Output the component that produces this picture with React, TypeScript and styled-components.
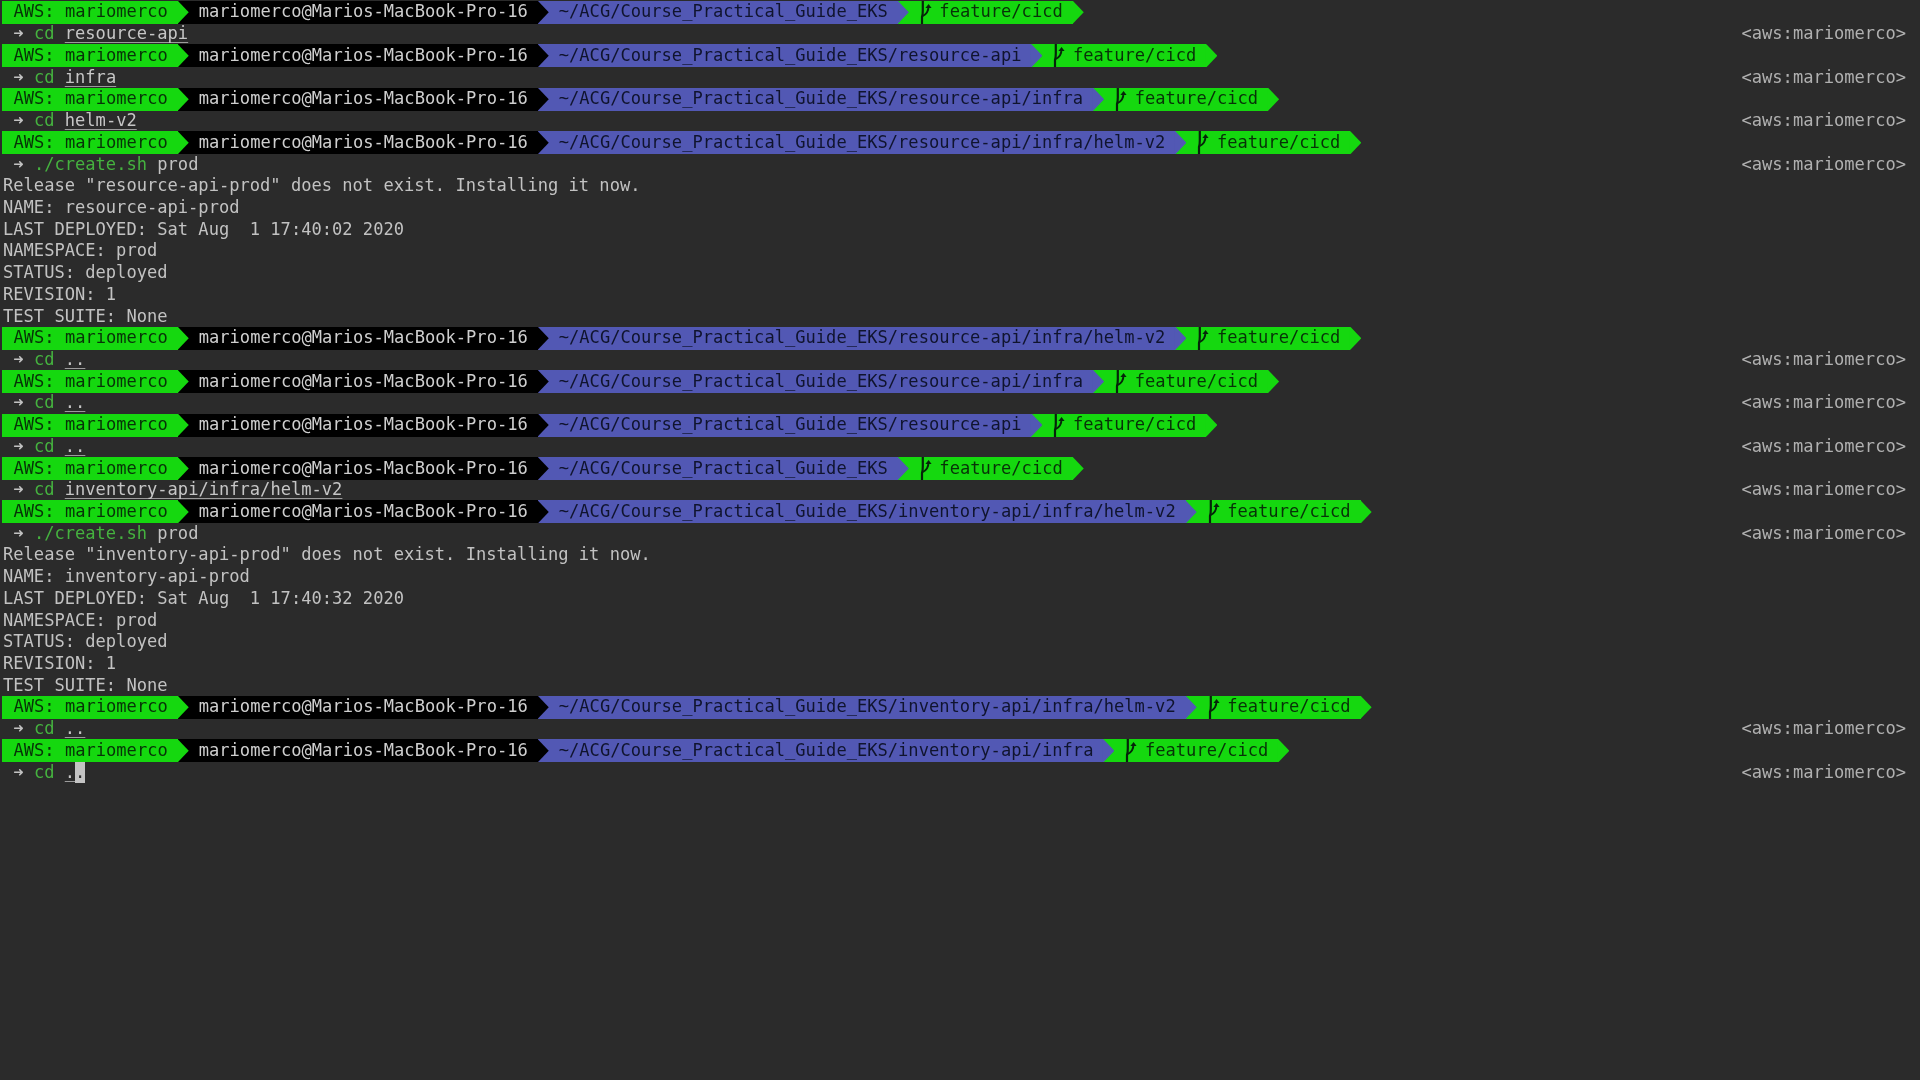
import React from "react";
import styled, { createGlobalStyle } from "styled-components";

const GlobalStyle = createGlobalStyle`
  html, body {
    margin: 0;
    padding: 0;
    background: #2b2b2b;
  }
`;

const Terminal = styled.div`
  box-sizing: border-box;
  width: 1920px;
  height: 1080px;
  overflow: hidden;
  background: #2b2b2b;
  padding: 1.5px 0 0 2px;
  font-family: "DejaVu Sans Mono", "Liberation Mono", monospace;
  font-size: 17.08px;
  line-height: 21.73px;
  color: #c2c2c2;
  white-space: pre;
  filter: blur(0.35px);
`;

const Row = styled.div`
  display: flex;
  align-items: center;
  justify-content: space-between;
  height: 21.73px;
  padding: 0 14px 0 1px;
`;

const Prompt = styled.div`
  display: flex;
  align-items: center;
  height: 21.73px;
`;

const Segment = styled.div<{ $bg: string; $fg: string; $layer: number; $first?: boolean }>`
  position: relative;
  z-index: ${(p) => p.$layer};
  display: flex;
  align-items: center;
  height: 23px;
  padding: 0 10px 0 ${(p) => (p.$first ? "11.5px" : "21px")};
  background: ${(p) => p.$bg};
  color: ${(p) => p.$fg};

  &::after {
    content: "";
    position: absolute;
    top: 0;
    left: calc(100% - 1px);
    width: 12px;
    height: 23px;
    background: ${(p) => p.$bg};
    clip-path: polygon(0 0, 1px 0, 100% 50%, 1px 100%, 0 100%);
  }
`;

const BranchGlyph = styled.svg`
  display: block;
  width: 20.56px;
  height: 23px;
  flex: none;
`;

const Arrow = styled.span`
  color: #c2c2c2;
`;

const Command = styled.span`
  color: #45b23f;
`;

const Arg = styled.span`
  color: #c6c6c6;
  text-decoration: underline;
  text-decoration-color: #9c9c9c;
  text-underline-offset: 3px;
`;

const Cursor = styled.span`
  display: inline-block;
  height: 21.73px;
  background: #c4c4c4;
  color: #2b2b2b;
  vertical-align: top;
`;

const RightPrompt = styled.span`
  color: #b0b0b0;
`;

const GREEN = "#15d80f";
const INK = "#083208";

function Branch() {
  return (
    <BranchGlyph viewBox="0 0 20.56 23" aria-hidden="true">
      <path d="M3.8 0V9.5C3.8 12 3.8 14 3 16V23" fill="none" stroke="#06240a" strokeWidth="2.2" />
      <path d="M3.8 15C8 13 9.5 10 9.5 5" fill="none" stroke="#06240a" strokeWidth="1.9" />
      <path d="M6.4 7L9.6 3L12.6 7Z" fill="#06240a" />
    </BranchGlyph>
  );
}

function PromptBar({ path }: { path: string }) {
  return (
    <Prompt>
      <Segment $bg={GREEN} $fg={INK} $layer={4} $first>
        AWS: mariomerco
      </Segment>
      <Segment $bg="#000000" $fg="#cfcfcf" $layer={3}>
        mariomerco@Marios-MacBook-Pro-16
      </Segment>
      <Segment $bg="#5258b4" $fg="#10142e" $layer={2}>
        {path}
      </Segment>
      <Segment $bg={GREEN} $fg={INK} $layer={1}>
        <Branch />
        feature/cicd
      </Segment>
    </Prompt>
  );
}

function CommandLine({ children }: { children: React.ReactNode }) {
  return (
    <Row>
      <span>
        {" "}
        <Arrow>➜</Arrow> {children}
      </span>
      <RightPrompt>{"<aws:mariomerco>"}</RightPrompt>
    </Row>
  );
}

function Cd({ target }: { target: string }) {
  return (
    <CommandLine>
      <Command>cd</Command> <Arg>{target}</Arg>
    </CommandLine>
  );
}

function Create() {
  return (
    <CommandLine>
      <Command>./create.sh</Command> prod
    </CommandLine>
  );
}

const BASE = "~/ACG/Course_Practical_Guide_EKS";

function Release({ name, time }: { name: string; time: string }) {
  const lines = [
    `Release "${name}-prod" does not exist. Installing it now.`,
    `NAME: ${name}-prod`,
    `LAST DEPLOYED: Sat Aug  1 17:40:${time} 2020`,
    "NAMESPACE: prod",
    "STATUS: deployed",
    "REVISION: 1",
    "TEST SUITE: None",
  ];
  return (
    <>
      {lines.map((line) => (
        <Row key={line}>{line}</Row>
      ))}
    </>
  );
}

export default function App() {
  return (
    <Terminal>
      <GlobalStyle />
      <PromptBar path={BASE} />
      <Cd target="resource-api" />
      <PromptBar path={`${BASE}/resource-api`} />
      <Cd target="infra" />
      <PromptBar path={`${BASE}/resource-api/infra`} />
      <Cd target="helm-v2" />
      <PromptBar path={`${BASE}/resource-api/infra/helm-v2`} />
      <Create />
      <Release name="resource-api" time="02" />
      <PromptBar path={`${BASE}/resource-api/infra/helm-v2`} />
      <Cd target=".." />
      <PromptBar path={`${BASE}/resource-api/infra`} />
      <Cd target=".." />
      <PromptBar path={`${BASE}/resource-api`} />
      <Cd target=".." />
      <PromptBar path={BASE} />
      <Cd target="inventory-api/infra/helm-v2" />
      <PromptBar path={`${BASE}/inventory-api/infra/helm-v2`} />
      <Create />
      <Release name="inventory-api" time="32" />
      <PromptBar path={`${BASE}/inventory-api/infra/helm-v2`} />
      <Cd target=".." />
      <PromptBar path={`${BASE}/inventory-api/infra`} />
      <CommandLine>
        <Command>cd</Command> <Arg>.</Arg>
        <Cursor>.</Cursor>
      </CommandLine>
    </Terminal>
  );
}
